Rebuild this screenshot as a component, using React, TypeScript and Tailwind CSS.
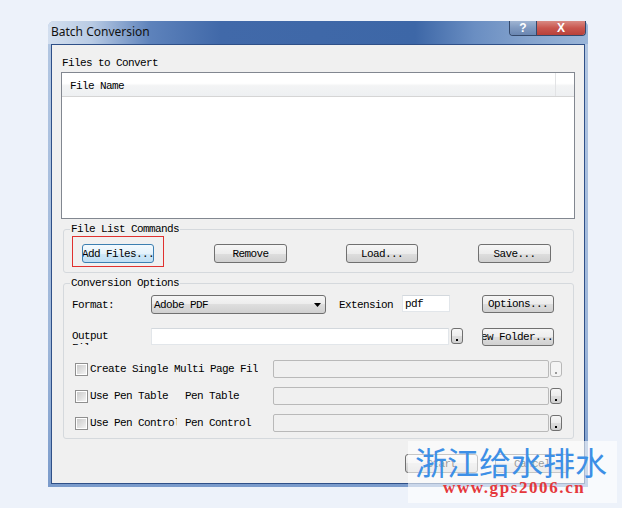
import React from 'react';

const MONO = "font-['Liberation_Mono','DejaVu_Sans_Mono',monospace] text-[11px] tracking-[-0.6px] leading-[12px] text-black";

const BTN_NORMAL = 'border-[#707070] bg-[linear-gradient(#f6f6f6_0%,#ececec_50%,#dedede_50%,#d0d0d0_100%)]';
const BTN_FOCUS = 'border-[#3c7fb1] bg-[linear-gradient(#f4fafe_0%,#e4f2fb_50%,#d0e8f8_50%,#c0dff4_100%)]';

function Btn({ label, size, focus = false, right = false }: { label: string; size: string; focus?: boolean; right?: boolean }) {
  return (
    <div
      className={`${size} shrink-0 overflow-hidden whitespace-nowrap rounded-[3px] border flex items-center ${right ? 'justify-end' : 'justify-center'} ${focus ? BTN_FOCUS : BTN_NORMAL}`}
    >
      {label}
    </div>
  );
}

function DotBtn({ disabled = false }: { disabled?: boolean }) {
  return (
    <div
      className={`w-[12px] h-[16px] shrink-0 rounded-[3px] border flex items-end justify-center pb-[2px] ${disabled ? 'border-[#b8b8b8] bg-[#f4f4f4] text-[#9a9a9a]' : 'border-[#707070] bg-[linear-gradient(#f6f6f6_0%,#ececec_50%,#dedede_50%,#d0d0d0_100%)]'}`}
    >
      <div className="w-[2px] h-[2px] bg-current" />
    </div>
  );
}

function Check() {
  return (
    <div className="w-[13px] h-[13px] shrink-0 border border-[#8f8f8f] bg-white p-[1px]">
      <div className="w-full h-full bg-[linear-gradient(135deg,#cbcbcb_0%,#e2e2e2_60%,#f4f4f4_100%)]" />
    </div>
  );
}

function DisabledBox() {
  return <div className="w-[276px] h-[18px] shrink-0 rounded-[2px] border border-[#b9b9b9] bg-[#f0f0f0]" />;
}

export default function App() {
  return (
    <div className="relative w-[622px] h-[508px] overflow-hidden bg-[#edf2fa] pt-[21px] pl-[48px]">
      {/* fenêtre */}
      <div className="w-[540px] h-[466px] flex flex-col rounded-t-[6px] bg-[linear-gradient(#b3c7e2,#9db6d9_70%,#7a9bcb)]">
        <div className="h-[23px] shrink-0 flex justify-between items-start rounded-t-[6px] bg-[linear-gradient(90deg,#d3dfef_0%,#b9cbe4_8%,#5d82bb_19%,#4169a9_32%,#3d67a7_68%,#6a8ec2_79%,#87a5ce_90%,#9ab5d8_100%)]">
          <div className="pl-[3px] pt-[2px] font-['Noto_Sans',sans-serif] text-[12px] leading-[18px] text-[#111]">Batch Conversion</div>
          <div className="mr-[2px] flex rounded-b-[4px] border border-t-0 border-[#34496b] overflow-hidden">
            <div className="w-[27px] h-[14px] flex items-center justify-center bg-[linear-gradient(#9fb4d2,#7f99c0_50%,#6a86b1)] border-r border-[#34496b] font-['Liberation_Sans',sans-serif] text-[12px] font-bold leading-none text-white">?</div>
            <div className="w-[48px] h-[14px] flex items-center justify-center bg-[linear-gradient(#d98a83,#c9564e_50%,#b8413a)] font-['Liberation_Sans',sans-serif] text-[12px] font-bold leading-none text-white">X</div>
          </div>
        </div>

        <div className="flex-1 flex flex-col px-[3px] pb-[3px]">
          <div className={`flex-1 flex flex-col border border-[#2f5088] bg-[#f0f0f0] pt-[12px] ${MONO}`}>
            <div className="ml-[10px] whitespace-pre">Files to Convert</div>

            {/* liste */}
            <div className="ml-[9px] mt-[3px] w-[514px] h-[147px] shrink-0 border border-[#828790] bg-white">
              <div className="h-[24px] flex border-b border-[#d5d5d5] bg-[linear-gradient(#ffffff_0%,#ffffff_45%,#f3f4f5_55%,#eef0f2_100%)]">
                <div className="w-[494px] border-r border-[#e2e3e5] pl-[8px] pt-[7px] whitespace-pre">File Name</div>
              </div>
            </div>

            {/* commandes */}
            <fieldset className="ml-[11px] mt-[4px] w-[511px] shrink-0 rounded-[3px] border border-[#d5d9dd] pb-[5px]">
              <legend className="ml-[6px] px-[1px] whitespace-pre">File List Commands</legend>
              <div className="flex items-start">
                <div className="ml-[8px] mt-[1px] border border-[#e0312f] px-[9px] pt-[7px] pb-[3px]">
                  <Btn label="Add Files..." size="w-[72px] h-[19px]" focus />
                </div>
                <div className="ml-[50px] mt-[9px]"><Btn label="Remove" size="w-[73px] h-[19px]" /></div>
                <div className="ml-[59px] mt-[9px]"><Btn label="Load..." size="w-[72px] h-[19px]" /></div>
                <div className="ml-[60px] mt-[9px]"><Btn label="Save..." size="w-[73px] h-[19px]" /></div>
              </div>
            </fieldset>

            {/* options */}
            <fieldset className="ml-[11px] mt-[4px] w-[511px] shrink-0 rounded-[3px] border border-[#d5d9dd] pb-[6px]">
              <legend className="ml-[6px] px-[1px] whitespace-pre">Conversion Options</legend>

              <div className="mt-[6px] pl-[8px] flex items-start">
                <div className="w-[79px] h-[19px] flex items-center">Format:</div>
                <div className="w-[175px] h-[19px] shrink-0 rounded-[3px] border border-[#707070] bg-[linear-gradient(#f6f6f6_0%,#ececec_50%,#dedede_50%,#d0d0d0_100%)] flex items-center justify-between pl-[2px] pr-[4px]">
                  <span className="whitespace-pre">Adobe PDF</span>
                  <svg width="7" height="4" viewBox="0 0 7 4"><path d="M0 0h7L3.5 4z" fill="#000" /></svg>
                </div>
                <div className="ml-[13px] w-[63px] h-[19px] flex items-center">Extension</div>
                <div className="w-[48px] h-[17px] shrink-0 border border-[#e2e6ea] border-t-[#d3d8dd] bg-white pl-[2px] flex items-center">pdf</div>
                <div className="ml-[32px]"><Btn label="Options..." size="w-[72px] h-[18px]" /></div>
              </div>

              <div className="mt-[14px] pl-[8px] flex items-start">
                <div className="w-[79px] h-[17px] overflow-hidden pt-[2px]">
                  <div className="w-[40px] leading-[12px]">Output File</div>
                </div>
                <div className="w-[298px] h-[17px] shrink-0 border border-[#e2e6ea] border-t-[#d3d8dd] bg-white" />
                <div className="ml-[2px]"><DotBtn /></div>
                <div className="ml-[19px]"><Btn label="New Folder..." size="w-[72px] h-[18px]" right /></div>
              </div>

              <div className="mt-[14px] pl-[8px] flex items-center h-[18px]">
                <div className="ml-[3px]"><Check /></div>
                <div className="ml-[2px] w-[168px] overflow-hidden whitespace-pre">Create Single Multi Page File</div>
                <div className="ml-[15px]"><DisabledBox /></div>
                <div className="ml-[1px]"><DotBtn disabled /></div>
              </div>

              <div className="mt-[9px] pl-[8px] flex items-center h-[18px]">
                <div className="ml-[3px]"><Check /></div>
                <div className="ml-[2px] w-[95px] whitespace-pre">Use Pen Table</div>
                <div className="w-[88px] whitespace-pre">Pen Table</div>
                <DisabledBox />
                <div className="ml-[1px]"><DotBtn /></div>
              </div>

              <div className="mt-[9px] pl-[8px] flex items-center h-[18px]">
                <div className="ml-[3px]"><Check /></div>
                <div className="ml-[2px] w-[87px] overflow-hidden whitespace-pre">Use Pen Control</div>
                <div className="ml-[8px] w-[88px] whitespace-pre">Pen Control</div>
                <DisabledBox />
                <div className="ml-[1px]"><DotBtn /></div>
              </div>
            </fieldset>

            <div className="mt-[15px] ml-[353px] flex">
              <Btn label="Start" size="w-[73px] h-[19px]" />
              <div className="ml-[17px]"><Btn label="Cancel" size="w-[74px] h-[19px]" /></div>
            </div>
          </div>
        </div>
      </div>

      {/* filigrane */}
      <div className="absolute left-[408px] top-[441px] w-[209px] h-[62px] bg-white/60 flex flex-col">
        <div className="ml-[7px] mt-[4px] font-['Noto_Sans_CJK_SC',sans-serif] text-[32px] leading-[32px] text-[#3d8fe6] whitespace-nowrap">浙江给水排水</div>
        <div className="ml-[35px] mt-[2px] font-['Liberation_Serif',serif] font-bold text-[17px] tracking-[1.6px] leading-[17px] text-[#e5383b]">www.gps2006.cn</div>
      </div>
    </div>
  );
}
